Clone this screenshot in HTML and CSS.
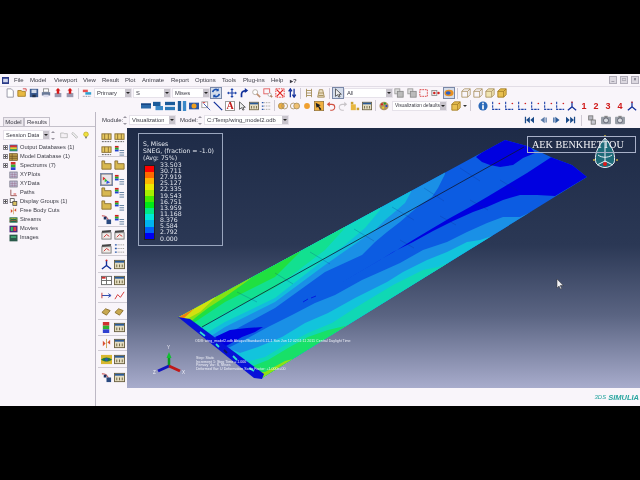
FILE: index.html
```html
<!DOCTYPE html>
<html lang="en">
<head>
  <meta charset="UTF-8" />
  <title>Abaqus/CAE - wing_model2.odb</title>
  <link rel="stylesheet" href="styles.css">
</head>
<body>

  <svg class="defs" width="0" height="0">
    <symbol id="new" viewBox="0 0 12 12"><path d="M2.500 1h5l2.500 2.500V11h-7.500z" fill="#fff" stroke="#8a8a9a"/></symbol>
    <symbol id="open" viewBox="0 0 12 12"><path d="M1 3h4l1 1h4v6H1z" fill="#e8b840" stroke="#a07820"/><path d="M7 1h4v3" fill="none" stroke="#d03030"/></symbol>
    <symbol id="save" viewBox="0 0 12 12"><rect x="1" y="1" width="10" height="10" fill="#3a5a90"/><rect x="3" y="2" width="6" height="4" fill="#cfd8e8"/><rect x="4" y="8" width="4" height="3" fill="#22304a"/></symbol>
    <symbol id="print" viewBox="0 0 12 12"><rect x="3" y="1" width="6" height="4" fill="#fff" stroke="#888"/><rect x="1" y="5" width="10" height="4" fill="#6a7a98"/><rect x="3" y="8" width="6" height="3" fill="#dde"/></symbol>
    <symbol id="up" viewBox="0 0 12 12"><rect x="2" y="6" width="8" height="5" fill="#9a9ab0"/><path d="M6 0l3 3H7.500v4h-3V3H3z" fill="#d81818"/></symbol>
    <symbol id="query" viewBox="0 0 12 12"><rect x="1" y="2" width="6" height="3" fill="#e85050"/><rect x="4" y="5" width="7" height="3" fill="#30a0d0"/><path d="M1 10h10" stroke="#667" stroke-dasharray="1 1"/></symbol>
    <symbol id="sync" viewBox="0 0 12 12"><path d="M2 5a4 4 0 0 1 7-2M10 7a4 4 0 0 1-7 2" fill="none" stroke="#1a50b0" stroke-width="2"/><path d="M9 0v4H6zM3 12V8h3z" fill="#1a50b0"/></symbol>
    <symbol id="move" viewBox="0 0 12 12"><path d="M6 0l2 2.500H6.700v3h3V4.200L12 6l-2.300 1.800V6.700h-3v3h1.300L6 12 4 9.700h1.300v-3h-3v1.100L0 6l2.300-1.800v1.100h3v-3H4z" fill="#1a40a8"/></symbol>
    <symbol id="rotate" viewBox="0 0 12 12"><path d="M3 11V7a4 4 0 0 1 6-3" fill="none" stroke="#12309a" stroke-width="2"/><path d="M7 0l4 3-4 3z" fill="#12309a"/></symbol>
    <symbol id="mag" viewBox="0 0 12 12"><circle cx="5" cy="5" r="3" fill="#fff" stroke="#b0a8a0"/><path d="M7 7l4 4" stroke="#c09070" stroke-width="2"/></symbol>
    <symbol id="boxzoom" viewBox="0 0 12 12"><rect x="1" y="1" width="7" height="6" fill="none" stroke="#e05050"/><circle cx="8" cy="8" r="2" fill="#fff" stroke="#aaa"/><path d="M9 9l2 2" stroke="#b08060" stroke-width="2"/></symbol>
    <symbol id="fit" viewBox="0 0 12 12"><rect x="1" y="1" width="10" height="10" fill="#fff" stroke="#e02020" stroke-dasharray="2 1"/><path d="M2 2l8 8M10 2l-8 8" stroke="#e02020" stroke-width="1.500"/></symbol>
    <symbol id="updown" viewBox="0 0 12 12"><path d="M4 11V3M2 4l2-3 2 3" fill="none" stroke="#12309a" stroke-width="1.500"/><path d="M8.500 1v8M6.500 8l2 3 2-3" fill="none" stroke="#12309a" stroke-width="1.500"/></symbol>
    <symbol id="rungs" viewBox="0 0 12 12"><path d="M3 1v10M9 1v10M3 3h6M3 6h6M3 9h6" stroke="#a08850" fill="none"/></symbol>
    <symbol id="tower" viewBox="0 0 12 12"><path d="M2 11L4 2h4l2 9z" fill="#e8dcc0" stroke="#a08850"/><path d="M3 6h6M3 9h6" stroke="#a08850"/></symbol>
    <symbol id="arrow" viewBox="0 0 12 12"><path d="M3 1v9l2.500-2 1.500 3 1.500-.7L7 7.500h3z" fill="#eee" stroke="#222" stroke-width=".8"/></symbol>
    <symbol id="stack" viewBox="0 0 12 12"><rect x="1" y="1" width="6" height="6" fill="#ddd" stroke="#999"/><rect x="4" y="4" width="7" height="7" fill="#bbb" stroke="#888"/></symbol>
    <symbol id="wire" viewBox="0 0 12 12"><path d="M1 4l3-3h7v7l-3 3H1zM1 4h7v7M8 4l3-3" fill="none" stroke="#a89060"/></symbol>
    <symbol id="wirefill" viewBox="0 0 12 12"><path d="M1 4l3-3h7v7l-3 3H1z" fill="#f0e4b0" stroke="#a89060"/><path d="M1 4h7v7M8 4l3-3" fill="none" stroke="#a89060"/></symbol>
    <symbol id="solid" viewBox="0 0 12 12"><path d="M1 4l3-3h7v7l-3 3H1z" fill="#e8c050" stroke="#a07820"/><path d="M1 4h7v7M8 4l3-3" fill="none" stroke="#a07820"/></symbol>
    <symbol id="redbox" viewBox="0 0 12 12"><rect x="1" y="2" width="9" height="8" fill="none" stroke="#d83030" stroke-dasharray="2 1"/></symbol>
    <symbol id="dots" viewBox="0 0 12 12"><rect x="1" y="3" width="6" height="6" fill="#eee" stroke="#888"/><circle cx="4" cy="6" r="1.500" fill="#d02020"/><circle cx="9" cy="6" r="1.500" fill="#d02020"/></symbol>
    <symbol id="eyeball" viewBox="0 0 12 12"><ellipse cx="6" cy="6" rx="5.500" ry="4" fill="#e89020"/><ellipse cx="5" cy="6" rx="3" ry="2" fill="#3060c0"/></symbol>
    <symbol id="bar1" viewBox="0 0 12 12"><rect x="0" y="3" width="12" height="6" fill="#2a68a8"/><rect x="0" y="3" width="12" height="1.500" fill="#103a78"/></symbol>
    <symbol id="bar2" viewBox="0 0 12 12"><rect x="0" y="1" width="9" height="5" fill="#1a5a9a"/><rect x="3" y="6" width="9" height="5" fill="#3a88c8"/></symbol>
    <symbol id="bar3" viewBox="0 0 12 12"><rect x="0" y="1" width="12" height="4" fill="#1a5a9a"/><rect x="0" y="7" width="12" height="4" fill="#2a78b8"/></symbol>
    <symbol id="bar4" viewBox="0 0 12 12"><rect x="1" y="0" width="4" height="12" fill="#1a5a9a"/><rect x="7" y="0" width="4" height="12" fill="#3a88c8"/></symbol>
    <symbol id="odbbtn" viewBox="0 0 12 12"><rect x="0" y="2" width="12" height="8" fill="#2a58a8"/><circle cx="6" cy="6" r="3" fill="#f0a020"/></symbol>
    <symbol id="xyplot" viewBox="0 0 12 12"><rect x="1" y="1" width="7" height="7" fill="#fff" stroke="#999"/><path d="M3 3l8 8" stroke="#2040a8"/><path d="M2 2h3" stroke="#d02020"/></symbol>
    <symbol id="line" viewBox="0 0 12 12"><path d="M1 1l10 10" stroke="#12309a" stroke-width="1.500"/></symbol>
    <symbol id="win" viewBox="0 0 12 12"><rect x=".5" y="1.500" width="11" height="9" fill="#e4dcc0" stroke="#6a6040"/><rect x="1" y="2" width="10" height="2" fill="#2a5a98"/><path d="M3 6v3M6 6v3M9 6v3" stroke="#6a6040"/></symbol>
    <symbol id="list" viewBox="0 0 12 12"><path d="M1 2h2M1 6h2M1 10h2" stroke="#2a58a8" stroke-width="1.500"/><path d="M4 2h7M4 6h7M4 10h7" stroke="#8a8a80" stroke-dasharray="1 1"/></symbol>
    <symbol id="circ2" viewBox="0 0 12 12"><circle cx="4" cy="6" r="3.500" fill="#f0b040" stroke="#a89060"/><circle cx="8" cy="6" r="3.500" fill="none" stroke="#a89060"/></symbol>
    <symbol id="circ3" viewBox="0 0 12 12"><circle cx="4" cy="6" r="3.500" fill="none" stroke="#a89060"/><circle cx="8" cy="6" r="3.500" fill="#f0c070" stroke="#a89060"/></symbol>
    <symbol id="circ1" viewBox="0 0 12 12"><circle cx="6" cy="6" r="3.500" fill="#f0a030"/></symbol>
    <symbol id="pick" viewBox="0 0 12 12"><rect x="0" y="0" width="12" height="12" fill="#f0b040" stroke="#555"/><path d="M2 2l6 3-2 1 3 4-2 1-2-4-2 1z" fill="#222"/></symbol>
    <symbol id="undo" viewBox="0 0 12 12"><path d="M3 4h4a3 3 0 0 1 0 7H5" fill="none" stroke="#d05040" stroke-width="1.300"/><path d="M4.500 1v6L1 4z" fill="#d05040"/></symbol>
    <symbol id="redo" viewBox="0 0 12 12"><path d="M9 4H5a3 3 0 0 0 0 7h2" fill="none" stroke="#c8c4c8" stroke-width="1.300"/><path d="M7.500 1v6L11 4z" fill="#c8c4c8"/></symbol>
    <symbol id="blocks" viewBox="0 0 12 12"><rect x="1" y="1" width="3" height="3" fill="#c8a030"/><rect x="1" y="4" width="6" height="7" fill="#e8b840"/><rect x="8" y="8" width="3" height="3" fill="#c8a030"/></symbol>
    <symbol id="palette" viewBox="0 0 12 12"><ellipse cx="6" cy="6" rx="5.500" ry="5" fill="#b09060"/><circle cx="3.500" cy="4" r="1.300" fill="#d02020"/><circle cx="7" cy="3" r="1.300" fill="#20a020"/><circle cx="9" cy="6" r="1.300" fill="#2040d0"/><circle cx="5" cy="8" r="1.300" fill="#e8d020"/></symbol>
    <symbol id="info" viewBox="0 0 12 12"><circle cx="6" cy="6" r="5.500" fill="#2a68b8"/><rect x="5" y="5" width="2" height="5" fill="#fff"/><rect x="5" y="2" width="2" height="2" fill="#fff"/></symbol>
    <symbol id="axes" viewBox="0 0 12 12"><path d="M2 1v9h9" fill="none" stroke="#1a40a8" stroke-width="1.300" stroke-dasharray="3 1"/><circle cx="10" cy="3" r="1" fill="#d02020"/></symbol>
    <symbol id="triad" viewBox="0 0 12 12"><path d="M6 1v6L1 11M6 7l5 4" fill="none" stroke="#12309a" stroke-width="1.500"/><circle cx="6" cy="1.500" r="1" fill="#d02020"/></symbol>
    <symbol id="first" viewBox="0 0 12 12"><path d="M1 2h1.500v8H1zM7 2v8L2.500 6zM12 2v8L7.500 6z" fill="#1a4a88"/></symbol>
    <symbol id="prev" viewBox="0 0 12 12"><path d="M8 2v8L3 6zM9 3h1.500v6H9z" fill="#5a7aa8"/></symbol>
    <symbol id="next" viewBox="0 0 12 12"><path d="M4 2v8l5-4zM1.500 3H3v6H1.500z" fill="#2a5a98"/></symbol>
    <symbol id="last" viewBox="0 0 12 12"><path d="M0 2v8l4.500-4zM5 2v8l4.500-4zM9.500 2H11v8H9.500z" fill="#1a4a88"/></symbol>
    <symbol id="frames" viewBox="0 0 12 12"><rect x="2" y="1" width="5" height="5" fill="#b8b8c0" stroke="#777"/><rect x="5" y="6" width="5" height="5" fill="#c8c8d0" stroke="#777"/></symbol>
    <symbol id="camera" viewBox="0 0 12 12"><rect x="0" y="2" width="12" height="9" rx="1" fill="#9aa0a8"/><rect x="4" y="1" width="4" height="2" fill="#888"/><circle cx="6" cy="6.500" r="3" fill="#d8dce0" stroke="#556"/></symbol>
    <symbol id="contour" viewBox="0 0 12 12"><rect x="1" y="2" width="10" height="6" fill="#e8c860" stroke="#8a7030"/><path d="M4 2v6M8 2v6" stroke="#8a7030"/><path d="M1 10.500h10" stroke="#555" stroke-dasharray="2 1"/></symbol>
    <symbol id="legendbtn" viewBox="0 0 12 12"><rect x="1" y="1" width="4" height="2" fill="#d02020"/><rect x="1" y="3" width="4" height="2" fill="#20b020"/><rect x="1" y="5" width="4" height="2" fill="#2040d0"/><path d="M6 6h5M6 8.500h5M6 11h5" stroke="#5a7a9a"/></symbol>
    <symbol id="steps" viewBox="0 0 12 12"><path d="M1 1h3v3h7v6H1z" fill="#d8b850" stroke="#8a7030"/></symbol>
    <symbol id="rainbow" viewBox="0 0 12 12"><rect x="0" y="0" width="12" height="12" fill="#e8e4e8" stroke="#666"/><path d="M2 3l3 2-3 2z" fill="#e03030"/><path d="M4 5l3 2-3 2z" fill="#30c030"/><path d="M6 7l4 2-4 2z" fill="#3050e0"/></symbol>
    <symbol id="clap" viewBox="0 0 12 12"><rect x="1" y="4" width="10" height="7" fill="#f0ece8" stroke="#777"/><path d="M1 2l10-1v2L1 4z" fill="#444"/><path d="M3 9l3-3 3 2" fill="none" stroke="#d03030"/></symbol>
    <symbol id="grid" viewBox="0 0 12 12"><rect x=".5" y="1.500" width="11" height="9" fill="#fff" stroke="#666"/><rect x="1" y="2" width="4" height="2" fill="#d03030"/><path d="M6 2v8M1 6h10" stroke="#666"/></symbol>
    <symbol id="dimen" viewBox="0 0 12 12"><path d="M1 6h9M8 4l3 2-3 2" fill="none" stroke="#2040a8"/><path d="M1 3v6" stroke="#c03030"/></symbol>
    <symbol id="zigzag" viewBox="0 0 12 12"><path d="M1 10l3-5 3 3 4-6" fill="none" stroke="#d03030"/></symbol>
    <symbol id="bolt" viewBox="0 0 12 12"><path d="M1 7l4-4 5 2-4 5z" fill="#c8a850" stroke="#8a7030"/></symbol>
    <symbol id="cuts" viewBox="0 0 12 12"><path d="M6 1v10" stroke="#c8a050"/><path d="M2 3l3 3-3 3zM10 2L7 5l3 2z" fill="#d85030"/></symbol>
    <symbol id="stream" viewBox="0 0 12 12"><rect x="0" y="1" width="12" height="10" fill="#d8b830"/><path d="M0 6c4-3 8-3 12 0-4 3-8 3-12 0z" fill="#1a7a4a"/><circle cx="6" cy="6" r="1.500" fill="#3050c0"/></symbol>
    <symbol id="curve" viewBox="0 0 12 12"><path d="M1 2c4 0 6 1 7 5" fill="none" stroke="#c03030"/><rect x="6" y="6" width="5" height="5" fill="#2a4a80"/><rect x="3" y="3" width="3" height="3" fill="#1a3060"/></symbol>
    <symbol id="spec" viewBox="0 0 12 12"><rect x="2" y="0" width="7" height="4" fill="#d03030"/><rect x="2" y="4" width="7" height="4" fill="#30b030"/><rect x="2" y="8" width="7" height="4" fill="#3040d0"/></symbol>
    <symbol id="outdb" viewBox="0 0 12 12"><rect x="0" y="1" width="12" height="10" fill="#3060a8"/><rect x="1" y="2" width="10" height="3" fill="#e03030"/><rect x="1" y="5" width="10" height="3" fill="#e8d030"/><rect x="1" y="8" width="10" height="2" fill="#30b040"/></symbol>
    <symbol id="moddb" viewBox="0 0 12 12"><rect x="0" y="1" width="12" height="10" fill="#b89848" stroke="#6a5020"/><path d="M0 5h12M0 8h12M4 1v10" stroke="#6a5020"/></symbol>
    <symbol id="xy" viewBox="0 0 12 12"><rect x=".5" y="1.500" width="11" height="9" fill="#c8c8e0" stroke="#667"/><path d="M1 5h10M1 8h10M4 2v8M8 2v8" stroke="#8a5a7a" stroke-width=".7"/></symbol>
    <symbol id="path" viewBox="0 0 12 12"><path d="M2 1v9h9" fill="none" stroke="#a06060" stroke-width="1.500"/><rect x="6" y="6" width="4" height="3" fill="#e8a0a0"/></symbol>
    <symbol id="dgroup" viewBox="0 0 12 12"><rect x="1" y="1" width="6" height="6" fill="#fff" stroke="#333"/><rect x="5" y="5" width="6" height="6" fill="#d8c060" stroke="#333"/></symbol>
    <symbol id="streams" viewBox="0 0 12 12"><rect x="0" y="2" width="12" height="8" fill="#1a6a4a"/><path d="M0 5c4-2 8-2 12 0" stroke="#e8d030" fill="none"/><path d="M0 8c4-2 8-2 12 0" stroke="#e05030" fill="none"/></symbol>
    <symbol id="movie" viewBox="0 0 12 12"><rect x="0" y="1" width="12" height="10" fill="#4a2a7a"/><rect x="2" y="3" width="3" height="6" fill="#30c060"/><rect x="6" y="3" width="4" height="6" fill="#e04040"/></symbol>
    <symbol id="image" viewBox="0 0 12 12"><rect x="0" y="1" width="12" height="10" fill="#2a5a4a"/><rect x="2" y="3" width="8" height="3" fill="#40a070"/></symbol>
    <symbol id="folderup" viewBox="0 0 12 12"><path d="M1 3h4l1 1h5v6H1z" fill="#f4f0f4" stroke="#aaa"/></symbol>
    <symbol id="clip" viewBox="0 0 12 12"><path d="M3 2l7 7-2 2-7-7z" fill="#eee" stroke="#aaa"/></symbol>
    <symbol id="bulb" viewBox="0 0 12 12"><circle cx="6" cy="5" r="3.500" fill="#f0e040" stroke="#b8a820"/><rect x="4.500" y="8.500" width="3" height="2.500" fill="#888"/></symbol>
  </svg>

  <div class="window">
    <div class="menubar">
      <svg class="appicon" viewBox="0 0 12 12"><rect width="12" height="12" fill="#2a3a88"/><rect x="2" y="3" width="8" height="6" fill="#cfd4ea"/></svg>
      <span class="m1">File</span><span class="m2">Model</span><span class="m3">Viewport</span><span class="m4">View</span><span class="m5">Result</span><span class="m6">Plot</span><span class="m7">Animate</span><span class="m8">Report</span><span class="m9">Options</span><span class="m10">Tools</span><span class="m11">Plug-ins</span><span class="m12">Help</span><span class="m13">&#9656;?</span>
      <div class="winbtns"><span class="winbtn">_</span><span class="winbtn">&#9633;</span><span class="winbtn">&times;</span></div>
    </div>

    <div class="toolbar tb1">
      <svg class="ico"><use href="#new"/></svg>
      <svg class="ico"><use href="#open"/></svg>
      <svg class="ico"><use href="#save"/></svg>
      <svg class="ico"><use href="#print"/></svg>
      <svg class="ico"><use href="#up"/></svg>
      <svg class="ico"><use href="#up"/></svg>
      <i class="sep"></i>
      <svg class="ico"><use href="#query"/></svg>
      <div class="combo w38 ml1"><span>Primary</span><b></b></div>
      <div class="combo w38 ml1"><span>S</span><b></b></div>
      <div class="combo w38 ml1"><span>Mises</span><b></b></div>
      <svg class="ico on"><use href="#sync"/></svg>
      <svg class="ico ml5"><use href="#move"/></svg>
      <svg class="ico"><use href="#rotate"/></svg>
      <svg class="ico"><use href="#mag"/></svg>
      <svg class="ico"><use href="#boxzoom"/></svg>
      <svg class="ico"><use href="#fit"/></svg>
      <svg class="ico"><use href="#updown"/></svg>
      <i class="sep"></i>
      <svg class="ico"><use href="#rungs"/></svg>
      <svg class="ico"><use href="#tower"/></svg>
      <i class="sep"></i>
      <svg class="ico on"><use href="#arrow"/></svg>
      <div class="combo w49"><span>All</span><b></b></div>
      <svg class="ico"><use href="#stack"/></svg>
      <svg class="ico ml2"><use href="#stack"/></svg>
      <svg class="ico"><use href="#redbox"/></svg>
      <svg class="ico"><use href="#dots"/></svg>
      <svg class="ico on ml2"><use href="#eyeball"/></svg>
      <i class="sep"></i>
      <svg class="ico"><use href="#wire"/></svg>
      <svg class="ico"><use href="#wire"/></svg>
      <svg class="ico"><use href="#wirefill"/></svg>
      <svg class="ico"><use href="#solid"/></svg>
    </div>

    <div class="toolbar tb2">
      <svg class="ico"><use href="#bar1"/></svg>
      <svg class="ico"><use href="#bar2"/></svg>
      <svg class="ico"><use href="#bar3"/></svg>
      <svg class="ico"><use href="#bar4"/></svg>
      <svg class="ico"><use href="#odbbtn"/></svg>
      <svg class="ico"><use href="#xyplot"/></svg>
      <svg class="ico"><use href="#line"/></svg>
      <span class="abtn">A</span>
      <svg class="ico"><use href="#arrow"/></svg>
      <svg class="ico"><use href="#win"/></svg>
      <svg class="ico"><use href="#list"/></svg>
      <i class="sep"></i>
      <svg class="ico"><use href="#circ2"/></svg>
      <svg class="ico"><use href="#circ3"/></svg>
      <svg class="ico"><use href="#circ1"/></svg>
      <svg class="ico"><use href="#pick"/></svg>
      <svg class="ico"><use href="#undo"/></svg>
      <svg class="ico"><use href="#redo"/></svg>
      <svg class="ico"><use href="#blocks"/></svg>
      <svg class="ico"><use href="#win"/></svg>
      <i class="sep"></i>
      <svg class="ico"><use href="#palette"/></svg>
      <div class="combo w55"><span>Visualization defaults</span><b></b></div>
      <svg class="ico ml4"><use href="#solid"/></svg>
      <span class="caret"></span>
      <i class="sep"></i>
      <svg class="ico ml5"><use href="#info"/></svg>
      <svg class="ico wide"><use href="#axes"/></svg>
      <svg class="ico wide"><use href="#axes"/></svg>
      <svg class="ico wide"><use href="#axes"/></svg>
      <svg class="ico wide"><use href="#axes"/></svg>
      <svg class="ico wide"><use href="#axes"/></svg>
      <svg class="ico"><use href="#axes"/></svg>
      <svg class="ico"><use href="#triad"/></svg>
      <span class="view-no">1</span><span class="view-no">2</span><span class="view-no">3</span><span class="view-no">4</span>
      <svg class="ico"><use href="#triad"/></svg>
    </div>

    <div class="workarea">
      <aside class="side">
        <div class="tabs"><span class="tab t-model">Model</span><span class="tab t-results">Results</span></div>
        <div class="session">
          <div class="combo w47"><span>Session Data</span><b></b></div>
          <span class="spin"></span>
          <svg class="sico"><use href="#folderup"/></svg>
          <svg class="sico"><use href="#clip"/></svg>
          <svg class="sico"><use href="#bulb"/></svg>
        </div>
        <ul class="tree">
          <li><i class="plus"></i><svg class="tico"><use href="#outdb"/></svg>Output Databases (1)</li>
          <li><i class="plus"></i><svg class="tico"><use href="#moddb"/></svg>Model Database (1)</li>
          <li><i class="plus"></i><svg class="tico"><use href="#spec"/></svg>Spectrums (7)</li>
          <li><i class="noplus"></i><svg class="tico"><use href="#xy"/></svg>XYPlots</li>
          <li><i class="noplus"></i><svg class="tico"><use href="#xy"/></svg>XYData</li>
          <li><i class="noplus"></i><svg class="tico"><use href="#path"/></svg>Paths</li>
          <li><i class="plus"></i><svg class="tico"><use href="#dgroup"/></svg>Display Groups (1)</li>
          <li><i class="noplus"></i><svg class="tico"><use href="#cuts"/></svg>Free Body Cuts</li>
          <li><i class="noplus"></i><svg class="tico"><use href="#streams"/></svg>Streams</li>
          <li><i class="noplus"></i><svg class="tico"><use href="#movie"/></svg>Movies</li>
          <li><i class="noplus"></i><svg class="tico"><use href="#image"/></svg>Images</li>
        </ul>
      </aside>

      <div class="main">
        <div class="context">
          <span class="lbl l-module">Module:</span>
          <span class="spin"></span>
          <div class="combo w47"><span>Visualization</span><b></b></div>
          <span class="lbl l-model">Model:</span>
          <span class="spin"></span>
          <div class="combo w85"><span>C:/Temp/wing_model2.odb</span><b></b></div>
          <div class="player">
            <svg class="ico"><use href="#first"/></svg>
            <svg class="ico"><use href="#prev"/></svg>
            <svg class="ico"><use href="#next"/></svg>
            <svg class="ico"><use href="#last"/></svg>
            <i class="sep"></i>
            <svg class="ico"><use href="#frames"/></svg>
            <svg class="ico"><use href="#camera"/></svg>
            <svg class="ico"><use href="#camera"/></svg>
          </div>
        </div>

        <div class="work">
          <div class="toolbox">
            <div class="tr h14"><svg class="ico"><use href="#contour"/></svg><svg class="ico"><use href="#contour"/></svg></div>
            <div class="tr h13 rule"><svg class="ico"><use href="#contour"/></svg><svg class="ico"><use href="#legendbtn"/></svg></div>
            <div class="tr h16"><svg class="ico"><use href="#steps"/></svg><svg class="ico"><use href="#steps"/></svg></div>
            <div class="tr h13"><svg class="ico on"><use href="#rainbow"/></svg><svg class="ico"><use href="#legendbtn"/></svg></div>
            <div class="tr h13"><svg class="ico"><use href="#steps"/></svg><svg class="ico"><use href="#legendbtn"/></svg></div>
            <div class="tr h13"><svg class="ico"><use href="#steps"/></svg><svg class="ico"><use href="#legendbtn"/></svg></div>
            <div class="tr h15 rule"><svg class="ico"><use href="#curve"/></svg><svg class="ico"><use href="#legendbtn"/></svg></div>
            <div class="tr h15"><svg class="ico"><use href="#clap"/></svg><svg class="ico"><use href="#clap"/></svg></div>
            <div class="tr h14 rule"><svg class="ico"><use href="#clap"/></svg><svg class="ico"><use href="#list"/></svg></div>
            <div class="tr h17 rule"><svg class="ico"><use href="#triad"/></svg><svg class="ico"><use href="#win"/></svg></div>
            <div class="tr h15 rule"><svg class="ico"><use href="#grid"/></svg><svg class="ico"><use href="#win"/></svg></div>
            <div class="tr h15 rule"><svg class="ico"><use href="#dimen"/></svg><svg class="ico"><use href="#zigzag"/></svg></div>
            <div class="tr h17 rule"><svg class="ico"><use href="#bolt"/></svg><svg class="ico"><use href="#bolt"/></svg></div>
            <div class="tr h16 rule"><svg class="ico"><use href="#spec"/></svg><svg class="ico"><use href="#win"/></svg></div>
            <div class="tr h15 rule"><svg class="ico"><use href="#cuts"/></svg><svg class="ico"><use href="#win"/></svg></div>
            <div class="tr h17 rule"><svg class="ico"><use href="#stream"/></svg><svg class="ico"><use href="#win"/></svg></div>
            <div class="tr h18"><svg class="ico"><use href="#curve"/></svg><svg class="ico"><use href="#win"/></svg></div>
          </div>

          <div class="viewport">
            <svg class="scene" viewBox="0 0 513 260" width="513" height="260">
              <!-- traced in screen pixels, so shifted by the viewport's corner -->
              <g transform="translate(-127 -128)">
                <clipPath id="wingclip"><path d="M179 317L505 140 527 146 553 158 572 165 587 177 262 378z"/></clipPath>
                <g clip-path="url(#wingclip)">
                  <rect x="170" y="130" width="430" height="260" fill="#0c5ce2"/>

                  <!-- leading edge bands, outermost last -->
                  <path d="M445 160L445 174 438 188 432 197 420 205 408 215 400 222 387 232 375 242 362 255 325 272 275 308 225 335 212 342 170 340 170 300z" fill="#1a90e6"/>
                  <path d="M415 175L411 192 405 203 397 210 385 220 375 230 325 265 275 302 225 327 205 340 170 340 170 300z" fill="#12bcdc"/>
                  <path d="M385 195L380 210 365 228 345 245 325 259 275 298 225 322 205 334 170 340 170 300z" fill="#10d8c0"/>
                  <path d="M350 215L345 228 325 250 275 288 225 313 195 331 170 340 170 300z" fill="#12e090"/>
                  <path d="M310 235L300 252 275 277 225 302 195 322 170 340 170 300z" fill="#20e040"/>
                  <path d="M265 262L250 279 225 297 208 308 195 318 170 340 170 300z" fill="#86e014"/>
                  <path d="M225 282L215 298 200 312 187 319 170 340 170 300z" fill="#d4e010"/>
                  <path d="M200 295L195 308 183 319 170 340 170 300z" fill="#f08010"/>

                  <!-- tip and the low stress strip -->
                  <path d="M476 157L505 135 527 143 535 153 523 158 513 165 500 167 490 165 482 162z" fill="#0000e0"/>
                  <path d="M553 156L592 174 555 196 537 195 520 195 503 200 487 207 473 212 453 221 433 231 413 242 393 252 380 260 325 292 385 257 397 250 413 240 433 228 450 218 470 207 487 197 507 185 527 173z" fill="#0000e0"/>
                  <path d="M215 337L230 330 247 328 263 327 255 332 242 337 228 345 222 348z" fill="#0000e0"/>
                  <path d="M303 302l5-3M311 298l5-2" stroke="#0000e0" stroke-width=".7"/>

                  <!-- trailing edge bands, closed outside the wing -->
                  <path d="M535 210L520 217 503 217 487 223 467 232 447 242 423 250 400 263 380 272 362 280 335 295 315 303 292 315 268 327 248 338 230 347 222 348 225 395 300 370z" fill="#1a90e6"/>
                  <path d="M495 235L480 240 467 242 447 252 427 260 403 272 387 282 355 298 328 313 305 323 282 337 258 347 240 353 228 348 225 395 300 370z" fill="#12c4dc"/>
                  <path d="M450 262L438 267 423 270 407 278 393 285 355 308 332 323 308 333 285 345 265 357 247 362 235 355 225 395 300 370z" fill="#10d8b4"/>
                  <path d="M360 322L345 326 328 330 308 337 288 348 268 360 250 367 240 360 225 395 300 370z" fill="#18e068"/>
                  <path d="M305 356L285 361 265 372 258 372 250 395 300 370z" fill="#90e014"/>
                </g>

                <path d="M202 327L524 147" stroke="#101830" stroke-width=".8"/>
                <path d="M237 292l20 10M275 273l18 11M310 252l20 12M354 229l20 12M392 207l22 13M424 188l20 13M460 168l20 13M500 180l18 11M470 200l18 10M440 216l16 9M400 240l14 8" stroke="#0a2a80" stroke-width=".5" opacity=".45"/>

                <!-- root rib -->
                <path d="M178 317L190 319 264 374 262 379 254 378z" fill="#0810d8"/>
                <path d="M200 332l5 4M216 344l3 3M233 356l4 4M249 368l5 3" stroke="#30e0d0" stroke-width="1.800"/>
                <path d="M224 350l3 3" stroke="#101860" stroke-width="2"/>

                <text class="note" x="195" y="342">ODB: wing_model2.odb    Abaqus/Standard 6.11-1    Sun Jun 12 02:51:11 2011 Central Daylight Time</text>
                <text class="note" x="196" y="359">Step: Static</text>
                <text class="note" x="196" y="362.500">Increment    1: Step Time =    1.000</text>
                <text class="note" x="196" y="366">Primary Var: S, Mises</text>
                <text class="note" x="196" y="369.500">Deformed Var: U   Deformation Scale Factor: +1.000e+00</text>

                <!-- triad -->
                <path d="M169 366v-9" stroke="#0a9a20" stroke-width="2.500"/><path d="M169 352l2.500 6h-5z" fill="#10c030"/>
                <path d="M169 366l-11 5" stroke="#1414c0" stroke-width="3"/>
                <path d="M169 366l11 5" stroke="#c01818" stroke-width="3"/>
                <text class="axis" x="167" y="349">Y</text>
                <text class="axis" x="153" y="374">Z</text>
                <text class="axis" x="182" y="374">X</text>

                <!-- compass -->
                <g transform="translate(605 156)">
                  <path d="M0 -18C-8 -9 -11 0 -9 7 -4 13 4 13 9 7 11 0 8 -9 0 -18z" fill="#1e6a78" stroke="#e8ecf4"/>
                  <path d="M0 -18V7M0 5L-8 9M0 5L8 9M-7 -1C-3 2 3 2 7 -1" fill="none" stroke="#e8ecf4"/>
                  <circle r="2" cy="8" fill="#e01818"/>
                  <circle r="1" cx="-11" cy="4" fill="#c8b040"/><circle r="1" cx="12" cy="4" fill="#c8b040"/><circle r="1" cy="-20" fill="#c8b040"/>
                </g>

                <!-- pointer -->
                <path d="M557 279v9l2-2 1.500 3 1.200-.6-1.500-2.900h3z" fill="#f4f4f8" stroke="#333" stroke-width=".5"/>
              </g>
            </svg>

            <div class="legend">
              <div>S, Mises</div>
              <div>SNEG, (fraction = -1.0)</div>
              <div>(Avg: 75%)</div>
              <div class="scale">
                <div class="swatches">
                  <i class="c1"></i><i class="c2"></i><i class="c3"></i><i class="c4"></i><i class="c5"></i><i class="c6"></i>
                  <i class="c7"></i><i class="c8"></i><i class="c9"></i><i class="c10"></i><i class="c11"></i><i class="c12"></i>
                </div>
                <div class="values">
                  <span>33.503</span><span>30.711</span><span>27.919</span><span>25.127</span><span>22.335</span><span>19.543</span><span>16.751</span>
                  <span>13.959</span><span>11.168</span><span>8.376</span><span>5.584</span><span>2.792</span><span>0.000</span>
                </div>
              </div>
            </div>

            <div class="stamp">AEK BENKHETTOU</div>
          </div>
        </div>

        <div class="status"><span class="ds">3DS</span><span class="simulia">SIMULIA</span></div>
      </div>
    </div>
  </div>

</body>
</html>
```

FILE: styles.css
```css
body {
  margin: 0;
  width: 640px;
  height: 480px;
  overflow: hidden;
  background-color: #000;
  font-family: 'Liberation Sans', sans-serif;
  font-size: 6px;
  color: #3a3a44;
}

.defs {
  display: block;
  height: 0;
}

/* the source is a soft video frame */
.window {
  margin-top: 74px;
  height: 332px;
  display: flex;
  flex-direction: column;
  background-color: #f9f5fa;
  overflow: hidden;
  filter: blur(.35px);
}

/* menu */
.menubar {
  height: 12px;
  flex: none;
  display: flex;
  align-items: center;
  padding-left: 2px;
  border-bottom: 1px solid #e2dde6;
  white-space: nowrap;
}

.appicon {
  width: 7px;
  height: 7px;
  margin-right: 5px;
}

.m1 { width: 16px; }
.m2 { width: 24px; }
.m3 { width: 29px; }
.m4 { width: 19px; }
.m5 { width: 23px; }
.m6 { width: 17px; }
.m7 { width: 29px; }
.m8 { width: 24px; }
.m9 { width: 27px; }
.m10 { width: 21px; }
.m11 { width: 28px; }
.m12 { width: 19px; }
.m13 { font-weight: bold; }

.winbtns {
  margin-left: auto;
  display: flex;
  gap: 3px;
  padding-right: 1px;
}

.winbtn {
  width: 6px;
  height: 6px;
  line-height: 5px;
  text-align: center;
  font-size: 5px;
  background-color: #dcd8e0;
  border: 1px solid #b0acb8;
  color: #445;
}

/* toolbars */
.toolbar {
  flex: none;
  display: flex;
  align-items: center;
}

.tb1 {
  padding-left: 4px;
  height: 12px;
}

.tb2 {
  padding-left: 140px;
  height: 13px;
}

.ico {
  width: 10px;
  height: 10px;
  margin: 0 1px;
  flex: none;
}

.ico.wide {
  margin: 0 1.500px;
}

.ico.on {
  background-color: #d4dcea;
  outline: 1px solid #7a88a8;
}

.sep {
  width: 1px;
  height: 11px;
  margin: 0 2px;
  background-color: #cfcad4;
  flex: none;
}

.ico.ml2,
.ml2 { margin-left: 2px; }
.ml1 { margin-left: 1px; }
.ico.ml4 { margin-left: 4px; }
.ico.ml5 { margin-left: 5px; }

.combo {
  height: 10px;
  flex: none;
  display: flex;
  align-items: center;
  justify-content: space-between;
  background-color: #fff;
  box-sizing: border-box;
  border: 1px solid #e6e2ea;
  font-size: 5.800px;
  line-height: 8px;
  white-space: nowrap;
  overflow: hidden;
  padding-left: 2px;
}

.combo span {
  overflow: hidden;
}

.combo b {
  width: 6px;
  height: 8px;
  flex: none;
  background-color: #c8c4cc;
  position: relative;
}

.combo b::after {
  content: "";
  position: absolute;
  left: 1px;
  top: 3px;
  border: 2px solid transparent;
  border-top-color: #222;
}

.w38 { width: 38px; }
.w47 { width: 47px; }
.w49 { width: 49px; }
.w55 { width: 55px; margin-left: 2px; font-size: 4.800px; }
.w85 { width: 85px; }

.abtn {
  width: 10px;
  height: 10px;
  margin: 0 1px;
  box-sizing: border-box;
  border: 1px solid #999;
  background-color: #fff;
  color: #c01818;
  font-family: 'Liberation Serif', serif;
  font-size: 10px;
  font-weight: bold;
  line-height: 8px;
  text-align: center;
}

.caret {
  border: 2.500px solid transparent;
  border-top-color: #333;
  margin: 3px 1px 0 1px;
}

.view-no {
  width: 12px;
  text-align: center;
  color: #d01818;
  font-size: 9px;
  font-weight: bold;
}

/* lower part */
.workarea {
  flex: 1;
  display: flex;
  min-height: 0;
}

.side {
  width: 96px;
  flex: none;
  box-sizing: border-box;
  border-right: 1px solid #bdb8c4;
}

.tabs {
  height: 15px;
  display: flex;
  padding: 5px 0 0 3px;
  box-sizing: border-box;
  border-bottom: 1px solid #c4c0ca;
}

.tab {
  line-height: 9px;
  text-align: center;
  box-sizing: border-box;
  border: 1px solid #c4c0ca;
  border-bottom: none;
  background-color: #ece8ee;
}

.t-model { width: 21px; }
.t-results { width: 26px; background-color: #f9f5fa; }

.session {
  display: flex;
  align-items: center;
  padding: 3px 0 0 3px;
  height: 13px;
  box-sizing: border-box;
}

.session .combo {
  font-size: 5.600px;
}

.session .sico {
  width: 8px;
  height: 8px;
  margin-left: 3px;
}

.spin {
  width: 5px;
  height: 9px;
  margin: 0 1px;
  flex: none;
  position: relative;
}

.spin::before,
.spin::after {
  content: "";
  position: absolute;
  left: 0;
  border: 2.500px solid transparent;
}

.spin::before {
  top: -2px;
  border-bottom-color: #9a96a0;
}

.spin::after {
  bottom: -2px;
  border-top-color: #9a96a0;
}

.tree {
  list-style: none;
  margin: 3px 0 0 0;
  padding: 0 0 0 3px;
}

.tree li {
  height: 9px;
  line-height: 9px;
  display: flex;
  align-items: center;
  white-space: nowrap;
  font-size: 5.700px;
}

.plus {
  width: 3px;
  height: 3px;
  border: 1px solid #8a8690;
  margin-right: 1px;
  flex: none;
  background: linear-gradient(#555, #555) center / 3px 1px no-repeat, linear-gradient(#555, #555) center / 1px 3px no-repeat;
}

.noplus {
  width: 5px;
  margin-right: 1px;
  flex: none;
}

.tico {
  width: 9px;
  height: 8px;
  margin-right: 2px;
  flex: none;
}

.main {
  flex: 1;
  display: flex;
  flex-direction: column;
  min-width: 0;
}

.context {
  height: 16px;
  flex: none;
  display: flex;
  align-items: center;
  padding-left: 6px;
}

.l-module { width: 20px; }
.l-model { width: 17px; margin-left: 4px; }

.player {
  margin-left: auto;
  display: flex;
  align-items: center;
  padding-right: 14px;
  gap: 2px;
}

.work {
  flex: 1;
  display: flex;
  min-height: 0;
}

.toolbox {
  width: 31px;
  flex: none;
  padding: 2px 0 0 2px;
  box-sizing: border-box;
  overflow: hidden;
}

.toolbox .ico {
  width: 11px;
  height: 11px;
}

.tr {
  display: flex;
  justify-content: center;
  align-items: center;
  box-sizing: border-box;
}

.rule { border-bottom: 1px solid #d0ccd4; }
.h13 { height: 13px; }
.h14 { height: 14px; }
.h15 { height: 15px; }
.h16 { height: 16px; }
.h17 { height: 17px; }
.h18 { height: 18px; }

.viewport {
  flex: 1;
  position: relative;
  overflow: hidden;
  background: linear-gradient(#1e2b47 0%, #2b3855 45%, #5a6482 72%, #a8accc 100%);
}

.scene {
  position: absolute;
  left: 0;
  top: 0;
}

.note {
  fill: #eef0f8;
  font-family: 'Liberation Sans', sans-serif;
  font-size: 3.600px;
}

.axis {
  fill: #f0f0f8;
  font-size: 4.500px;
  font-family: 'Liberation Sans', sans-serif;
}

.legend {
  position: absolute;
  left: 11px;
  top: 5px;
  width: 85px;
  height: 113px;
  box-sizing: border-box;
  border: 1px solid #9aa6be;
  padding: 5.500px 0 0 4px;
  color: #e4e8f0;
  font-family: 'DejaVu Sans', sans-serif;
  font-size: 6.200px;
  line-height: 7.400px;
}

.scale {
  display: flex;
}

.swatches {
  width: 11px;
  margin: 3px 5px 0 1px;
  display: flex;
  flex-direction: column;
  border: 1px solid #222;
  box-sizing: border-box;
  height: 75px;
}

.swatches i {
  flex: 1;
}

.c1 { background-color: #ff0000; }
.c2 { background-color: #ff6a00; }
.c3 { background-color: #ffb400; }
.c4 { background-color: #ece800; }
.c5 { background-color: #a6f000; }
.c6 { background-color: #46ec00; }
.c7 { background-color: #00e818; }
.c8 { background-color: #00e886; }
.c9 { background-color: #00e8d8; }
.c10 { background-color: #00b4f0; }
.c11 { background-color: #0060f8; }
.c12 { background-color: #0000f0; }

.values {
  display: flex;
  flex-direction: column;
}

.values span {
  height: 6.170px;
  line-height: 6.170px;
}

.stamp {
  position: absolute;
  left: 400px;
  top: 8px;
  width: 109px;
  height: 17px;
  box-sizing: border-box;
  border: 1px solid #a8b0c8;
  padding-left: 4px;
  color: #f4f4f8;
  font-family: 'Liberation Serif', serif;
  font-size: 10.200px;
  line-height: 15px;
  white-space: nowrap;
}

.status {
  height: 18px;
  flex: none;
  display: flex;
  align-items: center;
  justify-content: flex-end;
  padding-right: 1px;
  color: #2aa6a0;
  font-style: italic;
}

.ds {
  font-size: 6px;
  margin-right: 2px;
}

.simulia {
  font-size: 7.500px;
  font-weight: bold;
  white-space: nowrap;
}
```
